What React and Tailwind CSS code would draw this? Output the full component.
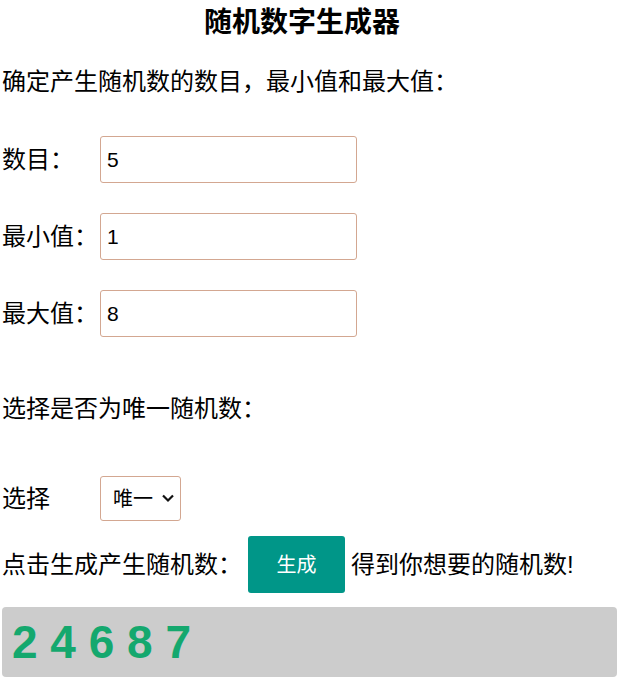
import { useState } from 'react';

const FONT = "font-['Liberation_Sans','Noto_Sans_CJK_SC',sans-serif]";

function Field({ label, value }) {
  return (
    <div className="flex items-center h-[47px]">
      <span className="w-[98px] text-[24px] leading-none">{label}</span>
      <input
        defaultValue={value}
        className="w-[257px] h-[47px] border border-[#d3a791] rounded-[3px] px-[6px] pt-[1px] text-[21px] outline-none"
      />
    </div>
  );
}

export default function App() {
  const [nums] = useState([2, 4, 6, 8, 7]);

  return (
    <div className={`${FONT} w-[618px] h-[680px] bg-white text-black pl-[2px] pr-[1px]`}>
      {/* title */}
      <h1 className="h-[46px] flex items-center justify-center pr-[15px] text-[28px] font-bold">
        随机数字生成器
      </h1>

      <p className="mt-[18px] h-[36px] flex items-center text-[24px]">
        确定产生随机数的数目，最小值和最大值：
      </p>

      {/* inputs */}
      <div className="mt-[36px] flex flex-col gap-[30px]">
        <Field label="数目：" value="5" />
        <Field label="最小值：" value="1" />
        <Field label="最大值：" value="8" />
      </div>

      <p className="mt-[54px] h-[36px] flex items-center text-[24px]">
        选择是否为唯一随机数：
      </p>

      {/* unique select */}
      <div className="mt-[49px] flex items-center h-[45px]">
        <span className="w-[98px] text-[24px]">选择</span>
        <div className="relative">
          <select className="appearance-none w-[81px] h-[45px] border border-[#d3a791] rounded-[3px] pl-[12px] text-[20px] bg-white outline-none">
            <option>唯一</option>
            <option>不唯一</option>
          </select>
          <svg
            className="absolute right-[6px] top-[17px] pointer-events-none"
            width="14"
            height="10"
            viewBox="0 0 14 10"
            fill="none"
            stroke="#111"
            strokeWidth="2.2"
          >
            <path d="M2 2.5l5 5 5-5" />
          </svg>
        </div>
      </div>

      {/* generate row */}
      <div className="mt-[15px] flex items-center h-[57px] text-[24px]">
        <span>点击生成产生随机数：</span>
        <button className="ml-[6px] w-[97px] h-[57px] bg-[#009688] text-white text-[20px] rounded-[3px]">
          生成
        </button>
        <span className="ml-[6px]">得到你想要的随机数!</span>
      </div>

      {/* result */}
      <div className="mt-[14px] h-[70px] bg-[#cccccc] rounded-[4px] flex items-center pl-[10px]">
        <span className="text-[46px] font-bold text-[#14a86e] leading-none">
          {nums.join(' ')}
        </span>
      </div>
    </div>
  );
}
